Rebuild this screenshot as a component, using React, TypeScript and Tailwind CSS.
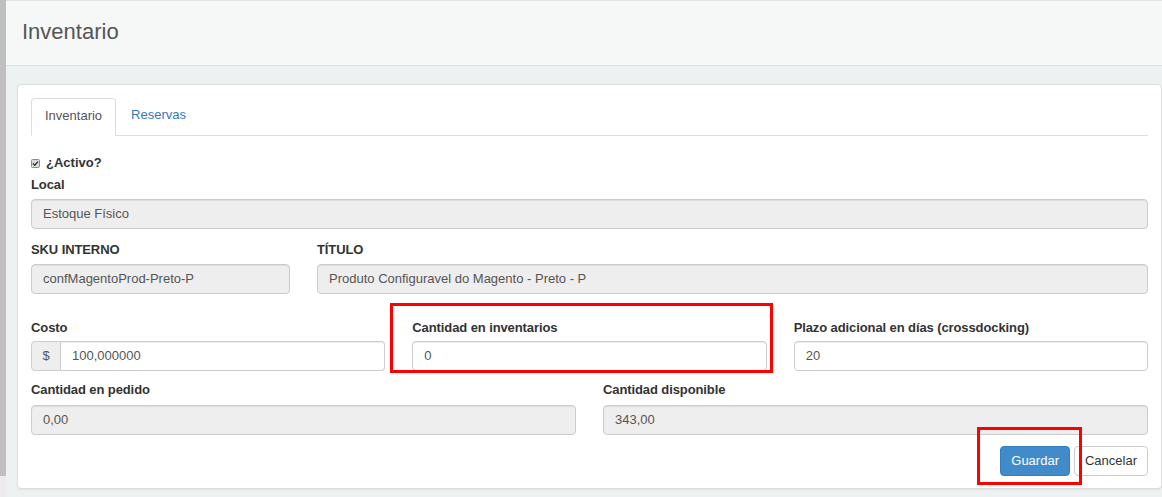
import React from "react";

const Label = ({ children }: { children: React.ReactNode }) => (
  <div className="h-[18px] leading-[18px] text-[13px] font-bold text-[#333] whitespace-nowrap tracking-[-0.1px]">{children}</div>
);

const DisabledInput = ({ value, mt = "mt-[5px]" }: { value: string; mt?: string }) => (
  <div className={`${mt} h-[30px] flex items-center px-[11px] bg-[#eeeeee] border border-[#cccccc] rounded-[4px] shadow-[inset_0_1px_1px_rgba(0,0,0,0.075)] text-[13px] text-[#555] whitespace-nowrap`}>
    {value}
  </div>
);

const TextInput = ({ value, mt = "mt-[4px]" }: { value: string; mt?: string }) => (
  <div className={`${mt} h-[30px] flex items-center px-[11px] bg-white border border-[#cccccc] rounded-[4px] shadow-[inset_0_1px_1px_rgba(0,0,0,0.075)] text-[13px] text-[#555] whitespace-nowrap`}>
    {value}
  </div>
);

export default function App() {
  return (
    <div className="flex w-full h-[497px] overflow-hidden bg-[#eef1f2] font-['Liberation_Sans',Arial,sans-serif]">
      <div className="w-[6px] flex flex-col shrink-0">
        <div className="h-[476px] bg-[#bfbfbf]" />
        <div className="flex-1 bg-[#ececec]" />
      </div>
      <div className="flex-1 flex flex-col">
        <div className="h-[66px] bg-[#f6f7f7] border-t border-b border-t-[#e4e4e4] border-b-[#dcdfdf] pl-[16px] pt-[18px]">
          <div className="text-[22px] leading-[26px] text-[#555]">Inventario</div>
        </div>
        <div className="pt-[18px] pl-[11px]">
          <div className="bg-white border border-[#dddddd] rounded-[4px] shadow-[0_1px_2px_rgba(0,0,0,0.06)] px-[13px] pt-[13px] pb-[12px]">
            {/* Tabs */}
            <div className="h-[38px] flex items-end border-b border-[#dddddd]">
              <div className="h-[38px] -mb-px px-[13px] pt-[8px] bg-white border border-[#dddddd] border-b-white rounded-t-[4px] text-[13px] leading-[18px] text-[#555]">
                Inventario
              </div>
              <div className="h-[38px] ml-[2px] px-[13px] pt-[9px] text-[13px] leading-[18px] text-[#337ab7]">
                Reservas
              </div>
            </div>

            {/* Checkbox */}
            <div className="mt-[18px] h-[18px] flex items-center">
              <svg width="9" height="9" viewBox="0 0 9 9" className="mr-[6px] mt-[1px]">
                <rect x="0.5" y="0.5" width="8" height="8" rx="1" fill="#dcdcdc" stroke="#8c8c8c" />
                <path d="M2 4.6 L3.7 6.3 L7 2.6" fill="none" stroke="#333" strokeWidth="1.4" />
              </svg>
              <span className="text-[13px] font-bold text-[#333] leading-[18px]">¿Activo?</span>
            </div>

            <div className="mt-[4px]">
              <Label>Local</Label>
              <DisabledInput value="Estoque Físico" />
            </div>

            <div className="mt-[12px] grid grid-cols-[259px_1fr] gap-x-[27px]">
              <div>
                <Label>SKU INTERNO</Label>
                <DisabledInput value="confMagentoProd-Preto-P" />
              </div>
              <div>
                <Label>TÍTULO</Label>
                <DisabledInput value="Produto Configuravel do Magento - Preto - P" />
              </div>
            </div>

            <div className="mt-[25px] grid grid-cols-3 gap-x-[27px]">
              <div>
                <Label>Costo</Label>
                <div className="mt-[4px] h-[30px] flex">
                  <div className="w-[30px] flex items-center justify-center bg-[#eeeeee] border border-[#cccccc] rounded-l-[4px] text-[13px] text-[#555]">
                    $
                  </div>
                  <div className="flex-1 flex items-center px-[11px] bg-white border border-l-0 border-[#cccccc] rounded-r-[4px] shadow-[inset_0_1px_1px_rgba(0,0,0,0.075)] text-[13px] text-[#555]">
                    100,000000
                  </div>
                </div>
              </div>
              <div className="relative">
                <Label>Cantidad en inventarios</Label>
                <TextInput value="0" />
                <div className="absolute left-[-22px] top-[-16px] w-[383px] h-[70px] border-[3px] border-[#ff0000] pointer-events-none" />
              </div>
              <div>
                <Label>Plazo adicional en días (crossdocking)</Label>
                <TextInput value="20" />
              </div>
            </div>

            <div className="mt-[10px] grid grid-cols-2 gap-x-[27px]">
              <div>
                <Label>Cantidad en pedido</Label>
                <DisabledInput value="0,00" mt="mt-[6px]" />
              </div>
              <div>
                <Label>Cantidad disponible</Label>
                <DisabledInput value="343,00" mt="mt-[6px]" />
              </div>
            </div>

            <div className="mt-[11px] flex justify-end gap-[4px]">
              <div className="relative">
                <button className="h-[30px] px-[10px] bg-[#428bca] border border-[#357ebd] rounded-[4px] text-[13px] text-white">
                  Guardar
                </button>
                <div className="absolute left-[-23px] top-[-19px] w-[105px] h-[58px] border-[3px] border-[#ff0000] pointer-events-none" />
              </div>
              <button className="h-[30px] px-[10px] bg-white border border-[#cccccc] rounded-[4px] text-[13px] text-[#333]">
                Cancelar
              </button>
            </div>
          </div>
        </div>
      </div>
    </div>
  );
}
